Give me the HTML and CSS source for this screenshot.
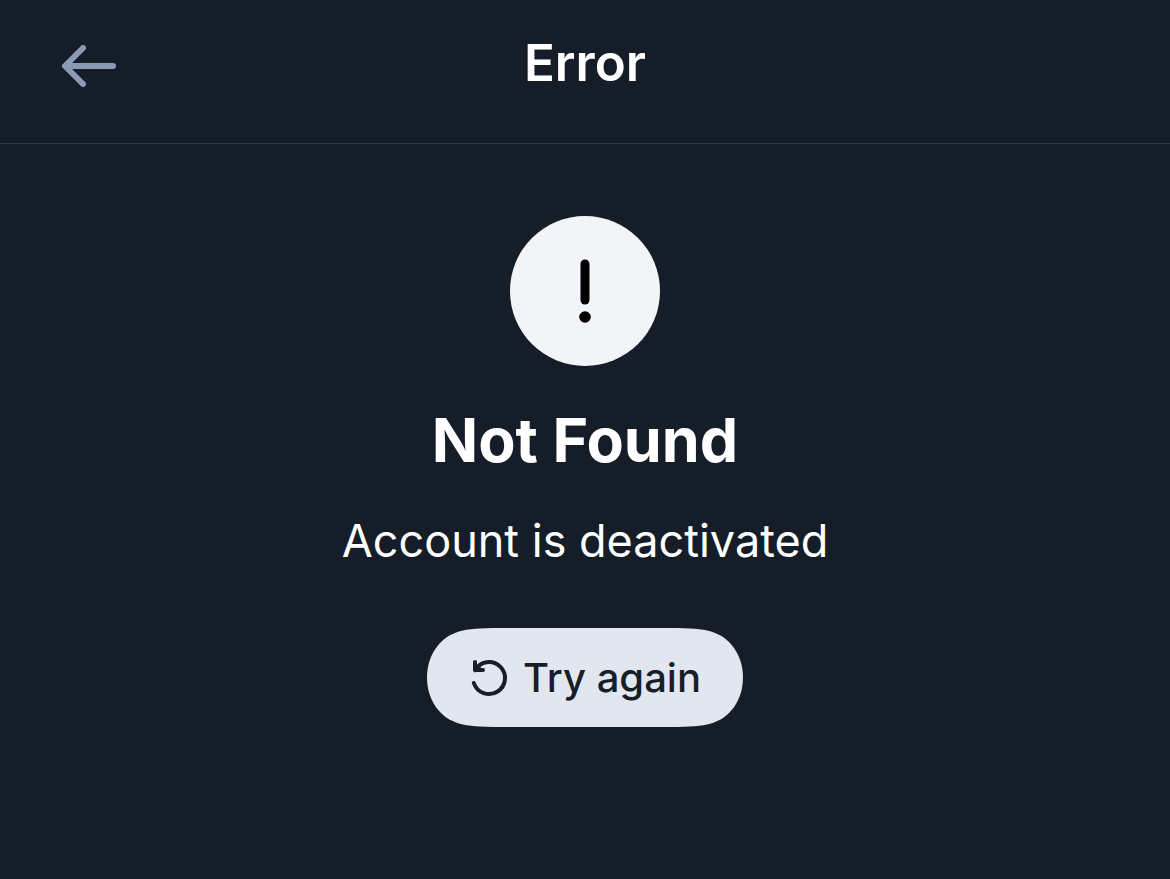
FILE: index.html
```html
<!DOCTYPE html>
<html lang="en">
<head>
<meta charset="utf-8">
<meta name="viewport" content="width=device-width, initial-scale=1">
<title>Error</title>
<link rel="stylesheet" href="styles.css">
</head>
<body>
<header class="topbar">
  <button class="back" type="button" aria-label="Back">
    <svg class="back-icon" viewBox="0 0 54 42" aria-hidden="true"><path d="M51 21H4M21 3L3 21L21 39"/></svg>
  </button>
  <h1 class="title">Error</h1>
</header>
<main class="content">
  <div class="badge">
    <svg class="badge-icon" viewBox="0 0 150 150" aria-hidden="true"><path d="M75 48V84"/><circle cx="75" cy="101" r="5.800"/></svg>
  </div>
  <h2 class="heading">Not Found</h2>
  <p class="message">Account is deactivated</p>
  <button class="retry" type="button">
    <svg class="retry-shape" viewBox="0 0 316 99" preserveAspectRatio="none" aria-hidden="true"><path d="M0 49.500C0 27 13 9 32 3.500C42 0.800 52 0 73 0H243C264 0 274 0.800 284 3.500C303 9 316 27 316 49.500C316 72 303 90 284 95.500C274 98.200 264 99 243 99H73C52 99 42 98.200 32 95.500C13 90 0 72 0 49.500Z"/></svg>
    <svg class="retry-icon" viewBox="0 0 36 36" aria-hidden="true"><path d="M1.800 23A16 16 0 1 0 3 10.300M3 2V10H11M3 10L7 6.500"/></svg>
    <span class="retry-label">Try again</span>
  </button>
</main>
</body>
</html>
```
FILE: styles.css
```css
* {
  box-sizing: border-box;
}

body {
  margin: 0;
  min-height: 100vh;
  background: #151d28;
  color: #fff;
  font-family: Inter, "Liberation Sans", sans-serif;
}

h1,
h2,
p {
  margin: 0;
}

button {
  border: 0;
  padding: 0;
  font: inherit;
  cursor: pointer;
}

.topbar {
  display: grid;
  grid-template-columns: 1fr auto 1fr;
  align-items: start;
  padding: 32px 62px;
  border-bottom: 1px solid #2b384a;
}

.back {
  justify-self: start;
  padding: 13px 0;
  background: none;
  color: #8c9bb5;
}

.back-icon {
  display: block;
  width: 54px;
  height: 42px;
  fill: none;
  stroke: currentColor;
  stroke-width: 6;
  stroke-linecap: round;
  stroke-linejoin: round;
}

.title {
  font-size: 51px;
  font-weight: 600;
  line-height: 62px;
  padding-bottom: 17px;
}

.content {
  display: flex;
  flex-direction: column;
  align-items: center;
  padding: 72px 24px;
}

.badge {
  width: 150px;
  height: 150px;
  border-radius: 50%;
  background: #f2f4f8;
}

.badge-icon {
  display: block;
  fill: #000;
  stroke: none;
}

.badge-icon path {
  stroke: #000;
  stroke-width: 9;
  stroke-linecap: round;
}

.heading {
  margin-top: 36px;
  font-size: 61px;
  font-weight: 700;
  line-height: 76px;
}

.message {
  margin-top: 36px;
  font-size: 45px;
  line-height: 54px;
}

.retry {
  position: relative;
  display: flex;
  align-items: center;
  gap: 15px;
  margin-top: 60px;
  padding: 25px 42px 25px 45px;
  border-radius: 50px;
  background: none;
  color: #161e29;
  font-size: 40px;
  font-weight: 500;
  line-height: 49px;
}

/* Pill outline with smoothed corners, behind the icon and label */
.retry-shape {
  position: absolute;
  inset: 0;
  width: 100%;
  height: 100%;
  fill: #e2e6ee;
}

.retry-icon,
.retry-label {
  position: relative;
}

.retry-icon {
  width: 36px;
  height: 36px;
  overflow: visible;
  fill: none;
  stroke: currentColor;
  stroke-width: 4;
  stroke-linecap: round;
  stroke-linejoin: round;
}
```
